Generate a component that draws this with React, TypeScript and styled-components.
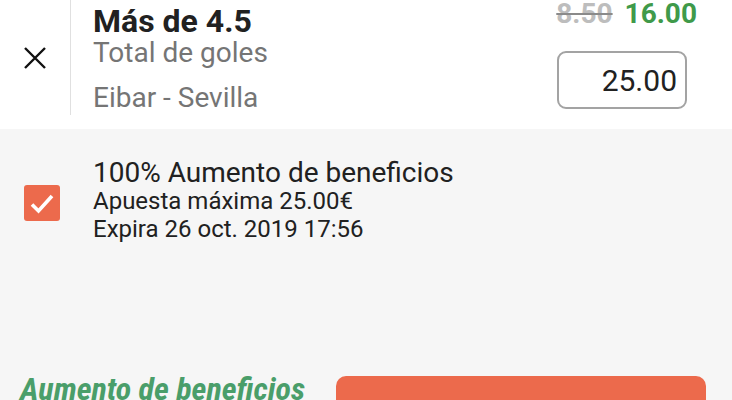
import React from "react";
import styled, { createGlobalStyle } from "styled-components";

const GlobalStyle = createGlobalStyle`
  body {
    margin: 0;
    background: #f6f6f6;
    font-family: Roboto, "Noto Sans", sans-serif;
    color: #212121;
  }
`;

const Page = styled.div`
  width: 732px;
  height: 400px;
  overflow: hidden;
  background: #f6f6f6;
`;

const Selection = styled.section`
  display: flex;
  background: #fff;
  padding-bottom: 14px;
`;

const CloseCell = styled.div`
  width: 70px;
  height: 115px;
  display: flex;
  align-items: center;
  justify-content: center;
`;

const Info = styled.div`
  flex: 1;
  height: 115px;
  border-left: 1.5px solid #e0e0e0;
  padding-left: 22px;
`;

const Title = styled.div`
  margin-top: 5px;
  font-size: 32px;
  line-height: 32px;
  font-weight: 700;
  color: #212121;
`;

const Sub = styled.div<{ $gap?: number }>`
  margin-top: ${(p) => p.$gap ?? 0}px;
  font-size: 28px;
  line-height: 30px;
  color: #757575;
`;

const Stake = styled.div`
  display: flex;
  flex-direction: column;
  align-items: flex-end;
  padding-right: 35px;
`;

const Odds = styled.div`
  display: flex;
  gap: 12px;
  font-size: 28px;
  line-height: 28px;
  font-weight: 700;
`;

const OldOdd = styled.span`
  color: #bdbdbd;
  text-decoration: line-through;
  text-decoration-color: #8a8a8a;
  text-decoration-thickness: 2px;
`;

const NewOdd = styled.span`
  color: #3f9a4a;
`;

const AmountBox = styled.div`
  margin-top: 23px;
  margin-right: 10px;
  box-sizing: border-box;
  width: 130px;
  height: 58px;
  border: 2px solid #a3a3a3;
  border-radius: 9px;
  display: flex;
  align-items: center;
  justify-content: flex-end;
  padding-right: 8px;
  font-size: 30px;
  color: #212121;
`;

const Promo = styled.section`
  display: flex;
  align-items: center;
  padding: 30px 0 0 24px;
  gap: 33px;
`;

const Check = styled.div`
  width: 36px;
  height: 36px;
  border-radius: 3px;
  background: #ec6a4c;
  margin-top: 4px;
  display: flex;
  align-items: center;
  justify-content: center;
`;

const PromoText = styled.div`
  display: flex;
  flex-direction: column;
`;

const PromoLine = styled.div<{ $big?: boolean }>`
  font-size: ${(p) => (p.$big ? 28 : 24)}px;
  line-height: 28px;
  color: #212121;
`;

const Footer = styled.div`
  margin-top: 133px;
  display: flex;
  align-items: flex-start;
  justify-content: space-between;
  padding: 0 26px 0 20px;
`;

const BoostLabel = styled.div`
  font-family: "Roboto Condensed", "Liberation Sans Narrow", Roboto, sans-serif;
  font-style: italic;
  font-weight: 700;
  font-size: 32px;
  line-height: 27px;
  color: #4a9e6a;
`;

const PlaceButton = styled.button`
  width: 370px;
  height: 56px;
  border: none;
  border-radius: 10px;
  background: #ec6a4c;
`;

const App: React.FC = () => (
  <Page>
    <GlobalStyle />
    <Selection>
      <CloseCell>
        <svg width="24" height="24" viewBox="0 0 24 24">
          <path d="M2 2 L22 22 M22 2 L2 22" stroke="#111" strokeWidth="2.4" fill="none" />
        </svg>
      </CloseCell>
      <Info>
        <Title>Más de 4.5</Title>
        <Sub $gap={1}>Total de goles</Sub>
        <Sub $gap={15}>Eibar - Sevilla</Sub>
      </Info>
      <Stake>
        <Odds>
          <OldOdd>8.50</OldOdd>
          <NewOdd>16.00</NewOdd>
        </Odds>
        <AmountBox>25.00</AmountBox>
      </Stake>
    </Selection>
    <Promo>
      <Check>
        <svg width="36" height="36" viewBox="0 0 36 36">
          <polyline points="8,19.5 14.5,26 28,11" stroke="#fff" strokeWidth="3.6" fill="none" />
        </svg>
      </Check>
      <PromoText>
        <PromoLine $big>100% Aumento de beneficios</PromoLine>
        <PromoLine>Apuesta máxima 25.00€</PromoLine>
        <PromoLine>Expira 26 oct. 2019 17:56</PromoLine>
      </PromoText>
    </Promo>
    <Footer>
      <BoostLabel>Aumento de beneficios</BoostLabel>
      <PlaceButton aria-label="Apostar" />
    </Footer>
  </Page>
);

export default App;
